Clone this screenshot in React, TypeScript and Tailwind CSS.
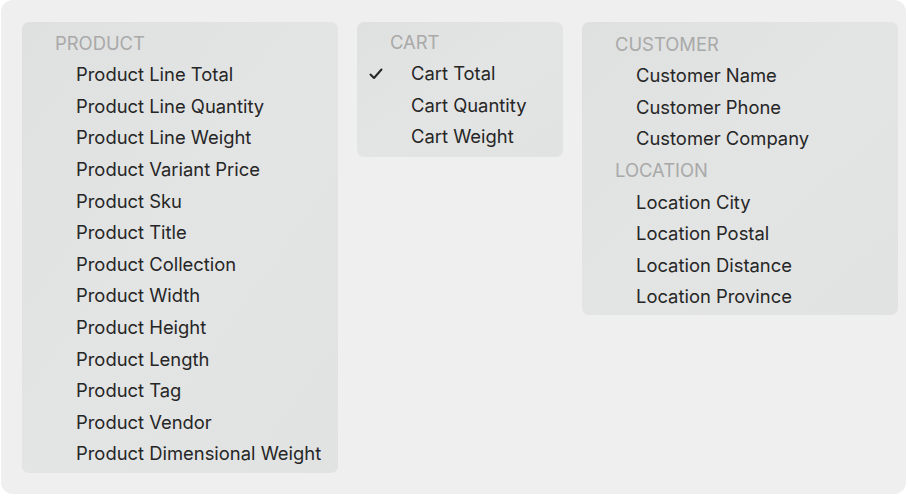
import React from "react";

type Section = { title: string; items: string[] };

const product: Section[] = [
  {
    title: "PRODUCT",
    items: [
      "Product Line Total",
      "Product Line Quantity",
      "Product Line Weight",
      "Product Variant Price",
      "Product Sku",
      "Product Title",
      "Product Collection",
      "Product Width",
      "Product Height",
      "Product Length",
      "Product Tag",
      "Product Vendor",
      "Product Dimensional Weight",
    ],
  },
];

const cart: Section[] = [
  { title: "CART", items: ["Cart Total", "Cart Quantity", "Cart Weight"] },
];

const customer: Section[] = [
  {
    title: "CUSTOMER",
    items: ["Customer Name", "Customer Phone", "Customer Company"],
  },
  {
    title: "LOCATION",
    items: [
      "Location City",
      "Location Postal",
      "Location Distance",
      "Location Province",
    ],
  },
];

function Menu({
  sections,
  className,
  checked,
}: {
  sections: Section[];
  className: string;
  checked?: string;
}) {
  return (
    <div
      className={`${className} shrink-0 rounded-[7px] bg-gradient-to-br from-[#dfe0e0] via-[#e3e4e4] to-[#e1e2e2]`}
    >
      {sections.map((s) => (
        <div key={s.title}>
          <div className="h-[31.6px] flex items-center pl-[33px] text-[#a9a9a9]">
            {s.title}
          </div>
          {s.items.map((item) => (
            <div
              key={item}
              className="h-[31.6px] flex items-center pl-[54px] relative text-[#262626]"
            >
              {checked === item && (
                <svg
                  className="absolute left-[12px] top-[10px]"
                  width="14"
                  height="12"
                  viewBox="0 0 14 12"
                  fill="none"
                >
                  <path
                    d="M1.5 6.5 L5 10 L12.5 1.5"
                    stroke="#262626"
                    strokeWidth="2"
                    strokeLinecap="round"
                    strokeLinejoin="round"
                  />
                </svg>
              )}
              {item}
            </div>
          ))}
        </div>
      ))}
    </div>
  );
}

export default function App() {
  return (
    <div className="w-[908px] h-[497px] bg-white">
      <div
        className="ml-[1px] w-[905px] h-[494px] rounded-[12px] bg-[#efefef] pt-[22px] pl-[21px] pr-[7px] flex items-start gap-[19px] text-[18.4px] leading-none"
        style={{ fontFamily: "Inter, 'Liberation Sans', sans-serif" }}
      >
        <Menu sections={product} className="w-[316px] pt-[5px] pb-[4px]" />
        <Menu
          sections={cart}
          className="w-[206px] pt-[4px] pb-[5px]"
          checked="Cart Total"
        />
        <Menu sections={customer} className="w-[316px] pt-[6px] pb-[3px]" />
      </div>
    </div>
  );
}
